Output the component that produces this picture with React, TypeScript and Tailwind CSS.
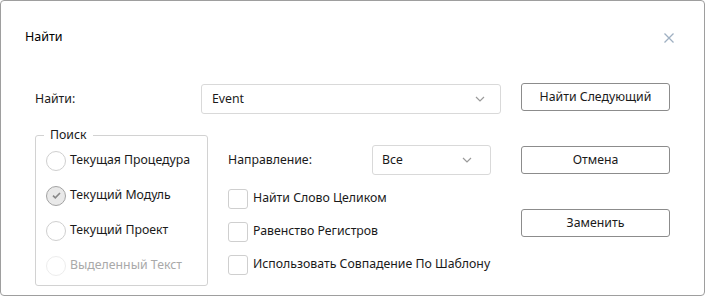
import { ReactNode } from 'react';

const font = { fontFamily: '"Noto Sans", "Open Sans", Arial, sans-serif' };

function Chevron() {
  return (
    <svg width="10" height="6" viewBox="0 0 10 6" className="shrink-0">
      <path d="M1 1l4 4 4-4" fill="none" stroke="#9a9a9a" strokeWidth="1.2" />
    </svg>
  );
}

function Radio({ label, checked, disabled }: { label: string; checked?: boolean; disabled?: boolean }) {
  return (
    <div className="flex h-[35px] items-center gap-[4px] pl-[2px]">
      <span
        className={
          checked
            ? 'flex h-[20px] w-[20px] items-center justify-center rounded-full border border-[#a3a3a3] bg-[#e9e9e9]'
            : disabled
              ? 'h-[20px] w-[20px] rounded-full border border-[#ededed]'
              : 'h-[20px] w-[20px] rounded-full border border-[#cfcfcf]'
        }
      >
        {checked && (
          <svg width="9" height="7" viewBox="0 0 9 7">
            <path d="M1 3.6l2.3 2.2L8 1" fill="none" stroke="#888" strokeWidth="1.6" />
          </svg>
        )}
      </span>
      <span className={disabled ? 'text-[#a9a9a9]' : 'text-[#1a1a1a]'}>{label}</span>
    </div>
  );
}

function Check({ label }: { label: string }) {
  return (
    <div className="flex h-[33px] items-center gap-[5px] whitespace-nowrap">
      <span className="h-[20px] w-[20px] shrink-0 rounded-[3px] border border-[#cfcfcf]" />
      <span className="text-[#1a1a1a]">{label}</span>
    </div>
  );
}

function Button({ children }: { children: ReactNode }) {
  return (
    <button className="flex h-[28px] w-[149px] items-center justify-center rounded-[3px] border border-[#8c8c8c] bg-white pt-[1px] text-[#1a1a1a]">
      {children}
    </button>
  );
}

export default function App() {
  return (
    <div
      style={font}
      className="h-[296px] w-[705px] overflow-hidden whitespace-nowrap rounded-[4px] border border-[#9e9e9e] bg-white text-[12.3px]"
    >
      {/* Заголовок */}
      <div className="flex h-[73px] items-center justify-between pl-[24px] pr-[30px]">
        <span className="text-[12.5px] text-black">Найти</span>
        <svg width="10" height="10" viewBox="0 0 10 10">
          <path d="M0.5 0.5l9 9M9.5 0.5l-9 9" stroke="#9fb0c2" strokeWidth="1.3" />
        </svg>
      </div>

      <div className="flex pl-[34px] pt-[9px]">
        {/* Левая часть */}
        <div className="flex w-[466px] flex-col">
          <div className="mt-[1px] flex h-[30px] items-center">
            <span className="w-[166px] text-[#1a1a1a]">Найти:</span>
            <div className="flex h-[30px] w-[300px] items-center justify-between rounded-[3px] border border-[#d9d9d9] pl-[10px] pr-[15px]">
              <span className="text-[#1a1a1a]">Event</span>
              <Chevron />
            </div>
          </div>

          <div className="mt-[13px] flex">
            <fieldset className="h-[159px] w-[173px] shrink-0 rounded-[3px] border border-[#d2d2d2] pl-[8px]">
              <legend className="px-[6px] leading-[16px] text-[#1a1a1a]">Поиск</legend>
              <Radio label="Текущая Процедура" />
              <Radio label="Текущий Модуль" checked />
              <Radio label="Текущий Проект" />
              <Radio label="Выделенный Текст" disabled />
            </fieldset>

            <div className="ml-[20px] mt-[18px] flex flex-col">
              <div className="flex h-[30px] items-center">
                <span className="w-[144px] text-[#1a1a1a]">Направление:</span>
                <div className="flex h-[30px] w-[119px] items-center justify-between rounded-[3px] border border-[#d9d9d9] pl-[9px] pr-[18px]">
                  <span className="text-[#1a1a1a]">Все</span>
                  <Chevron />
                </div>
              </div>
              <div className="mt-[7px] flex flex-col">
                <Check label="Найти Слово Целиком" />
                <Check label="Равенство Регистров" />
                <Check label="Использовать Совпадение По Шаблону" />
              </div>
            </div>
          </div>
        </div>

        {/* Кнопки */}
        <div className="ml-[20px] flex flex-col gap-[35px]">
          <Button>Найти Следующий</Button>
          <Button>Отмена</Button>
          <Button>Заменить</Button>
        </div>
      </div>
    </div>
  );
}
